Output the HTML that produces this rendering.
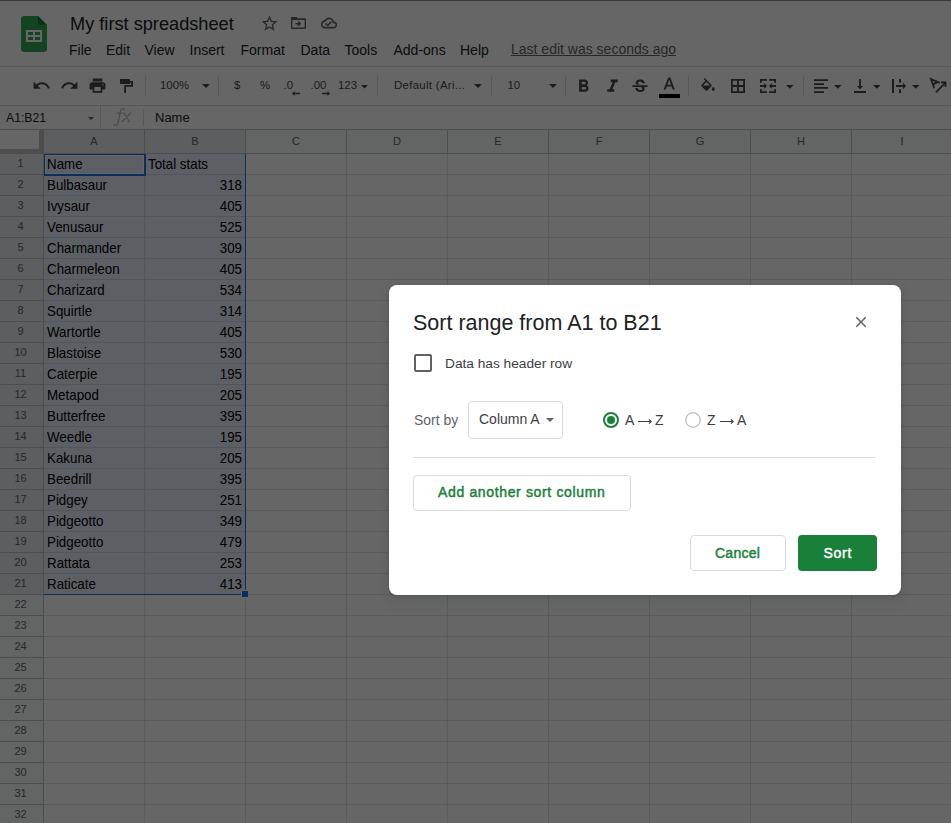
<!DOCTYPE html>
<html><head><meta charset="utf-8"><style>
html,body{margin:0;padding:0;width:951px;height:823px;overflow:hidden;background:#fff;}
body{position:relative;font-family:"Liberation Sans",sans-serif;}
.t{position:absolute;white-space:pre;line-height:normal;}
.r{position:absolute;box-sizing:content-box;}
.i{position:absolute;display:block;}
#scrim{position:absolute;left:0;top:0;width:951px;height:823px;background:rgba(0,0,0,0.6);}
#dlg{position:absolute;left:389px;top:285px;width:512px;height:310px;background:#fff;border-radius:8px;
box-shadow:0 4px 8px 3px rgba(60,64,67,.15),0 1px 3px rgba(60,64,67,.3);}
#dlgc{position:absolute;left:0;top:0;}
</style></head><body>
<div class="r" style="left:0px;top:0px;width:951px;height:1px;background:#919191;"></div>
<svg class="i" style="left:21px;top:16px" width="26" height="36" viewBox="0 0 26 36">
<path d="M3 0H17L26 9V33a3 3 0 0 1-3 3H3a3 3 0 0 1-3-3V3a3 3 0 0 1 3-3z" fill="#34a853"/>
<path d="M17 0L26 9H19a2 2 0 0 1-2-2z" fill="#188038"/>
<path d="M5 14H21V26H5z M7 16V19H12V16z M14 16V19H19V16z M7 21V24H12V21z M14 21V24H19V21z" fill="#fff" fill-rule="evenodd"/>
</svg>
<div class="t" style="left:70px;top:13.53px;font-size:18.2px;color:#202124;font-weight:400;">My first spreadsheet</div>
<svg class="i" style="left:259.5px;top:14px;" width="19" height="19" viewBox="0 0 24 24"><path fill="#5f6368" d="M22 9.24l-7.19-.62L12 2 9.19 8.63 2 9.24l5.46 4.73L5.82 21 12 17.27 18.18 21l-1.63-7.03L22 9.24zM12 15.4l-3.76 2.27 1-4.28-3.32-2.88 4.38-.38L12 6.1l1.71 4.04 4.38.38-3.32 2.88 1 4.28L12 15.4z"/></svg>
<svg class="i" style="left:291px;top:17px;" width="15" height="12" viewBox="0 0 15 12"><path fill="#5f6368" fill-rule="evenodd" d="M1 0H5.6L6.8 1.3H14A1 1 0 0 1 15 2.3V11A1 1 0 0 1 14 12H1A1 1 0 0 1 0 11V1A1 1 0 0 1 1 0Z M1.4 3H13.6V10.6H1.4Z"/><path fill="none" stroke="#5f6368" stroke-width="1.4" d="M4.3 6.8H9.2 M7 4.5L9.3 6.8 7 9.1"/></svg>
<svg class="i" style="left:321px;top:15.3px;" width="16" height="16" viewBox="0 0 24 24"><path fill="#5f6368" stroke="#5f6368" stroke-width="0.7" d="M19.35 10.04C18.67 6.59 15.64 4 12 4 9.11 4 6.6 5.64 5.35 8.04 2.34 8.36 0 10.91 0 14c0 3.31 2.69 6 6 6h13c2.76 0 5-2.24 5-5 0-2.64-2.05-4.78-4.65-4.96zM19 18H6c-2.21 0-4-1.79-4-4 0-2.05 1.53-3.76 3.56-3.97l1.07-.11.5-.95C8.080 7.14 9.94 6 12 6c2.62 0 4.88 1.86 5.39 4.43l.3 1.5 1.53.11c1.56.1 2.78 1.41 2.78 2.96 0 1.65-1.35 3-3 3zm-9-3.82l-2.09-2.09L6.5 13.5 10 17l6.01-6.01-1.41-1.41z"/></svg>
<div class="t" style="left:69px;top:42.33px;font-size:14px;color:#202124;font-weight:400;">File</div>
<div class="t" style="left:106px;top:42.33px;font-size:14px;color:#202124;font-weight:400;">Edit</div>
<div class="t" style="left:144.5px;top:42.33px;font-size:14px;color:#202124;font-weight:400;">View</div>
<div class="t" style="left:189.5px;top:42.33px;font-size:14px;color:#202124;font-weight:400;">Insert</div>
<div class="t" style="left:240.5px;top:42.33px;font-size:14px;color:#202124;font-weight:400;">Format</div>
<div class="t" style="left:300.5px;top:42.33px;font-size:14px;color:#202124;font-weight:400;">Data</div>
<div class="t" style="left:344.5px;top:42.33px;font-size:14px;color:#202124;font-weight:400;">Tools</div>
<div class="t" style="left:393.5px;top:42.33px;font-size:14px;color:#202124;font-weight:400;">Add-ons</div>
<div class="t" style="left:460px;top:42.33px;font-size:14px;color:#202124;font-weight:400;">Help</div>
<div class="t" style="left:511px;top:41.33px;font-size:14px;color:#5f6368;font-weight:400;text-decoration:underline;">Last edit was seconds ago</div>
<div class="r" style="left:0px;top:66px;width:951px;height:1px;background:#dadce0;"></div>
<div class="r" style="left:0px;top:105px;width:951px;height:1px;background:#dadce0;"></div>
<svg class="i" style="left:32px;top:76.1px;" width="19" height="19" viewBox="0 0 24 24"><path fill="#444746" d="M12.5 8c-2.65 0-5.05.99-6.9 2.6L2 7v9h9l-3.62-3.62c1.39-1.16 3.16-1.88 5.12-1.88 3.54 0 6.55 2.31 7.6 5.5l2.37-.78C21.08 11.03 17.15 8 12.5 8z"/></svg>
<svg class="i" style="left:60px;top:76.1px;" width="19" height="19" viewBox="0 0 24 24"><path fill="#444746" d="M18.4 10.6C16.55 8.99 14.15 8 11.5 8c-4.65 0-8.58 3.03-9.96 7.22L3.9 16c1.05-3.19 4.05-5.5 7.6-5.5 1.95 0 3.730.72 5.12 1.88L13 16h9V7l-3.6 3.6z"/></svg>
<svg class="i" style="left:88px;top:76.1px;" width="19" height="19" viewBox="0 0 24 24"><path fill="#444746" d="M19 8H5c-1.66 0-3 1.34-3 3v6h4v4h12v-4h4v-6c0-1.66-1.34-3-3-3zm-3 11H8v-5h8v5zm3-7c-.55 0-1-.45-1-1s.45-1 1-1 1 .45 1 1-.45 1-1 1zm-1-9H6v4h12V3z"/></svg>
<svg class="i" style="left:120px;top:79px;" width="13" height="14" viewBox="0 0 13 14"><path fill="#444746" d="M0.6 0H9.4A.6.6 0 0 1 10 .6V2H13V7.8H6V14H4.2V6H11.2V3.8H10V4.4A.6.6 0 0 1 9.4 5H.6A.6.6 0 0 1 0 4.4V.6A.6.6 0 0 1 .6 0Z"/></svg>
<div class="r" style="left:145px;top:76px;width:1px;height:20px;background:#dadce0;"></div>
<div class="t" style="left:160px;top:78.68px;font-size:11.4px;color:#444746;font-weight:400;">100%</div>
<svg class="i" style="left:202px;top:84px" width="8" height="4" viewBox="0 0 8 4"><path fill="#444746" d="M0 0H8L4.0 4z"/></svg>
<div class="r" style="left:218px;top:76px;width:1px;height:20px;background:#dadce0;"></div>
<div class="t" style="left:234px;top:78.68px;font-size:11.4px;color:#444746;font-weight:400;">$</div>
<div class="t" style="left:260px;top:78.68px;font-size:11.4px;color:#444746;font-weight:400;">%</div>
<div class="t" style="left:283.5px;top:78.68px;font-size:11.4px;color:#444746;font-weight:400;">.0</div>
<svg class="i" style="left:292px;top:91px" width="8" height="5" viewBox="0 0 8 5"><path fill="#444746" d="M0 2.5L2.5 0V1.8H8V3.2H2.5V5z"/></svg>
<div class="t" style="left:310.5px;top:78.68px;font-size:11.4px;color:#444746;font-weight:400;">.00</div>
<svg class="i" style="left:322px;top:91px" width="8" height="5" viewBox="0 0 8 5"><path fill="#444746" d="M8 2.5L5.5 0V1.8H0V3.2H5.5V5z"/></svg>
<div class="t" style="left:338px;top:78.68px;font-size:11.4px;color:#444746;font-weight:400;">123</div>
<svg class="i" style="left:360.5px;top:85px" width="7" height="3.6" viewBox="0 0 7 3.6"><path fill="#444746" d="M0 0H7L3.5 3.6z"/></svg>
<div class="r" style="left:377px;top:76px;width:1px;height:20px;background:#dadce0;"></div>
<div class="t" style="left:394px;top:78.68px;font-size:11.4px;color:#444746;font-weight:400;letter-spacing:0.32px;">Default (Ari...</div>
<svg class="i" style="left:473.5px;top:84px" width="8" height="4" viewBox="0 0 8 4"><path fill="#444746" d="M0 0H8L4.0 4z"/></svg>
<div class="r" style="left:491px;top:76px;width:1px;height:20px;background:#dadce0;"></div>
<div class="t" style="left:507.5px;top:78.68px;font-size:11.4px;color:#444746;font-weight:400;">10</div>
<svg class="i" style="left:549px;top:84px" width="8" height="4" viewBox="0 0 8 4"><path fill="#444746" d="M0 0H8L4.0 4z"/></svg>
<div class="r" style="left:565px;top:76px;width:1px;height:20px;background:#dadce0;"></div>
<svg class="i" style="left:573px;top:76px;" width="21" height="21" viewBox="0 0 24 24"><path fill="#444746" d="M15.6 10.79c.97-.67 1.65-1.77 1.65-2.79 0-2.26-1.75-4-4-4H7v14h7.040c2.09 0 3.71-1.7 3.71-3.79 0-1.52-.86-2.82-2.15-3.42zM10 6.5h3c.83 0 1.5.67 1.5 1.5s-.67 1.5-1.5 1.5h-3v-3zm3.5 9H10v-3h3.5c.83 0 1.5.67 1.5 1.5s-.67 1.5-1.5 1.5z"/></svg>
<svg class="i" style="left:601.5px;top:75.6px;" width="21" height="21" viewBox="0 0 24 24"><path fill="#444746" d="M10 4v3h2.21l-3.42 8H6v3h8v-3h-2.21l3.42-8H18V4z"/></svg>
<svg class="i" style="left:630px;top:77.3px;" width="20" height="20" viewBox="0 0 24 24"><path fill="#444746" d="M7.24 8.75c-.26-.48-.39-1.03-.39-1.67 0-.61.13-1.16.4-1.670.26-.5.63-.93 1.11-1.29.48-.35 1.05-.63 1.7-.83.66-.19 1.39-.29 2.18-.29.81 0 1.54.11 2.21.34.66.22 1.23.54 1.69.94.47.4.83.88 1.08 1.43.25.55.38 1.15.38 1.81h-3.01c0-.31-.05-.59-.15-.85-.09-.27-.24-.49-.44-.68-.2-.19-.45-.33-.75-.44-.3-.1-.66-.16-1.06-.16-.39 0-.74.04-1.03.13-.29.09-.53.21-.72.36-.19.16-.34.34-.44.55-.1.21-.15.43-.15.66 0 .48.25.88.74 1.21.38.25.77.48 1.41.7H7.39c-.05-.08-.11-.17-.15-.25zM21 12v-2H3v2h9.62c.18.07.4.14.55.2.37.17.66.34.87.51.21.17.35.36.43.57.07.2.11.43.11.69 0 .23-.05.45-.14.66-.09.2-.23.38-.42.53-.19.15-.42.26-.71.35-.29.08-.63.13-1.01.13-.43 0-.83-.04-1.18-.13s-.66-.23-.91-.42c-.25-.19-.45-.44-.59-.75-.14-.31-.25-.76-.25-1.21H6.4c0 .55.08 1.13.24 1.58.16.45.37.85.65 1.21.28.35.6.66.98.92.37.26.78.48 1.22.65.44.17.9.3 1.38.39.48.08.96.13 1.44.13.8 0 1.53-.09 2.18-.28s1.21-.45 1.67-.79c.46-.34.82-.77 1.07-1.27s.38-1.07.38-1.71c0-.6-.1-1.14-.31-1.61-.05-.11-.11-.23-.17-.33H21z"/></svg>
<svg class="i" style="left:659.4px;top:74.9px;" width="20.5" height="20.5" viewBox="0 0 24 24"><path fill="#444746" d="M5.49 17h2.42l1.27-3.5h5.65L16.09 17h2.42L13.25 3h-2.5L5.49 17zm4.42-5.61l2.03-5.79h.12l2.03 5.79H9.91z"/></svg>
<div class="r" style="left:659px;top:94px;width:21px;height:4px;background:#000;"></div>
<div class="r" style="left:688px;top:76px;width:1px;height:20px;background:#dadce0;"></div>
<svg class="i" style="left:699px;top:78px;" width="18" height="18" viewBox="0 0 24 24"><path fill="#444746" d="M16.56 8.94L7.62 0 6.21 1.41l2.38 2.38-5.15 5.15c-.59.59-.59 1.54 0 2.12l5.5 5.5c.29.29.68.44 1.06.44s.77-.15 1.06-.44l5.5-5.5c.59-.58.59-1.53 0-2.12zM5.21 10L10 5.21 14.790 10H5.21zM19 11.5s-2 2.17-2 3.5c0 1.1.9 2 2 2s2-.9 2-2c0-1.33-2-3.5-2-3.5z"/></svg>
<svg class="i" style="left:731px;top:79px;" width="14" height="14" viewBox="0 0 14 14"><path fill="#444746" fill-rule="evenodd" d="M0 0H14V14H0z M1.8 1.8V6.1H6.1V1.8z M7.9 1.8V6.1H12.2V1.8z M1.8 7.9V12.2H6.1V7.9z M7.9 7.9V12.2H12.2V7.9z"/></svg>
<svg class="i" style="left:760px;top:79px;" width="16" height="14" viewBox="0 0 16 14"><path fill="#444746" d="M0 0H7V1.8H1.8V3.8H0Z M0 10.2H1.8V12.2H7V14H0Z M9 0H16V3.8H14.2V1.8H9Z M9 12.2H14.2V10.2H16V14H9Z M0 6.1H4.2V4.1L7 7 4.2 9.9V7.9H0Z M16 6.1H11.8V4.1L9 7 11.8 9.9V7.9H16Z"/></svg>
<svg class="i" style="left:786px;top:85px" width="7.6" height="3.8" viewBox="0 0 7.6 3.8"><path fill="#444746" d="M0 0H7.6L3.8 3.8z"/></svg>
<div class="r" style="left:803px;top:76px;width:1px;height:20px;background:#dadce0;"></div>
<svg class="i" style="left:814px;top:79px;" width="14" height="14" viewBox="0 0 14 14"><path fill="#444746" d="M0 0.2H14V1.9H0Z M0 4.2H10V5.9H0Z M0 8.1H14V9.8H0Z M0 12.2H10V13.9H0Z"/></svg>
<svg class="i" style="left:834px;top:85px" width="7.6" height="3.8" viewBox="0 0 7.6 3.8"><path fill="#444746" d="M0 0H7.6L3.8 3.8z"/></svg>
<svg class="i" style="left:854px;top:79px;" width="12" height="14" viewBox="0 0 12 14"><path fill="#444746" d="M5.1 0H6.9V7H9.2L6 10.3 2.8 7H5.1z M0 12.1H12V13.9H0z"/></svg>
<svg class="i" style="left:873px;top:85px" width="7.6" height="3.8" viewBox="0 0 7.6 3.8"><path fill="#444746" d="M0 0H7.6L3.8 3.8z"/></svg>
<svg class="i" style="left:885px;top:72px;" width="66" height="26" viewBox="0 0 66 26"><path fill="#444746" d="M7 7H9V21H7z M14 7H16V10.8H14z M14 17.3H16V21H14z M11 13.1H18V14.9H11z M18 10.8L21 14 18 17.2z"/></svg>
<svg class="i" style="left:912px;top:85px" width="7.6" height="3.8" viewBox="0 0 7.6 3.8"><path fill="#444746" d="M0 0H7.6L3.8 3.8z"/></svg>
<svg class="i" style="left:885px;top:72px;" width="66" height="26" viewBox="0 0 66 26"><path fill="none" stroke="#444746" stroke-width="1.8" stroke-linejoin="miter" d="M49.3 16.3L46 7.2 54.8 10.8 M47.9 12.6L52.2 10.1 M50.9 20.3L60 11.2 M56 10.4H60.5V14.9"/></svg>
<div class="t" style="left:6px;top:110.96px;font-size:12.2px;color:#202124;font-weight:400;">A1:B21</div>
<svg class="i" style="left:88px;top:117px" width="6" height="3" viewBox="0 0 6 3"><path fill="#5f6368" d="M0 0H6L3.0 3z"/></svg>
<div class="r" style="left:100px;top:106px;width:1px;height:23px;background:#dadce0;"></div>
<svg class="i" style="left:106px;top:106px;" width="32" height="23" viewBox="0 0 32 23"><path fill="none" stroke="#bdc1c6" stroke-width="1.3" stroke-linecap="round" d="M18.3 4.0C17.8 2.4 15.2 2.0 14.6 4.6L12.1 16.8C11.6 19.6 9.0 20.2 7.6 18.4 M11.2 7.2H15.9 M18.3 7.4L23.2 15.5 M24.5 7.3L16.2 15.5"/><path fill="none" stroke="#bdc1c6" stroke-width="1.1" d="M15.6 7.2H19 M23.3 7.2H25.2 M15.1 15.5H17.6 M21.6 15.5H24.3"/></svg>
<div class="r" style="left:143px;top:109px;width:1px;height:17px;background:#dadce0;"></div>
<div class="t" style="left:155px;top:110.23px;font-size:13px;color:#202124;font-weight:400;">Name</div>
<div class="r" style="left:0px;top:129px;width:951px;height:1px;background:#c0c0c0;"></div>
<div class="r" style="left:0px;top:130px;width:951px;height:23px;background:#f8f9fa;"></div>
<div class="r" style="left:44px;top:130px;width:201px;height:23px;background:#e8eaed;"></div>
<div class="r" style="left:0px;top:130px;width:39px;height:19px;background:#ffffff;"></div>
<div class="r" style="left:39px;top:130px;width:5px;height:24px;background:#c0c0c0;"></div>
<div class="r" style="left:0px;top:149px;width:44px;height:5px;background:#c0c0c0;"></div>
<div class="r" style="left:44px;top:153px;width:907px;height:1px;background:#c0c0c0;"></div>
<div class="r" style="left:0px;top:154px;width:43px;height:669px;background:#f8f9fa;"></div>
<div class="r" style="left:0px;top:154px;width:43px;height:441px;background:#e8eaed;"></div>
<div class="r" style="left:43px;top:154px;width:1px;height:669px;background:#c0c0c0;"></div>
<div class="r" style="left:0px;top:174px;width:43px;height:1px;background:#c0c0c0;"></div>
<div class="r" style="left:44px;top:174px;width:907px;height:1px;background:#e2e3e3;"></div>
<div class="r" style="left:0px;top:195px;width:43px;height:1px;background:#c0c0c0;"></div>
<div class="r" style="left:44px;top:195px;width:907px;height:1px;background:#e2e3e3;"></div>
<div class="r" style="left:0px;top:216px;width:43px;height:1px;background:#c0c0c0;"></div>
<div class="r" style="left:44px;top:216px;width:907px;height:1px;background:#e2e3e3;"></div>
<div class="r" style="left:0px;top:237px;width:43px;height:1px;background:#c0c0c0;"></div>
<div class="r" style="left:44px;top:237px;width:907px;height:1px;background:#e2e3e3;"></div>
<div class="r" style="left:0px;top:258px;width:43px;height:1px;background:#c0c0c0;"></div>
<div class="r" style="left:44px;top:258px;width:907px;height:1px;background:#e2e3e3;"></div>
<div class="r" style="left:0px;top:279px;width:43px;height:1px;background:#c0c0c0;"></div>
<div class="r" style="left:44px;top:279px;width:907px;height:1px;background:#e2e3e3;"></div>
<div class="r" style="left:0px;top:300px;width:43px;height:1px;background:#c0c0c0;"></div>
<div class="r" style="left:44px;top:300px;width:907px;height:1px;background:#e2e3e3;"></div>
<div class="r" style="left:0px;top:321px;width:43px;height:1px;background:#c0c0c0;"></div>
<div class="r" style="left:44px;top:321px;width:907px;height:1px;background:#e2e3e3;"></div>
<div class="r" style="left:0px;top:342px;width:43px;height:1px;background:#c0c0c0;"></div>
<div class="r" style="left:44px;top:342px;width:907px;height:1px;background:#e2e3e3;"></div>
<div class="r" style="left:0px;top:363px;width:43px;height:1px;background:#c0c0c0;"></div>
<div class="r" style="left:44px;top:363px;width:907px;height:1px;background:#e2e3e3;"></div>
<div class="r" style="left:0px;top:384px;width:43px;height:1px;background:#c0c0c0;"></div>
<div class="r" style="left:44px;top:384px;width:907px;height:1px;background:#e2e3e3;"></div>
<div class="r" style="left:0px;top:405px;width:43px;height:1px;background:#c0c0c0;"></div>
<div class="r" style="left:44px;top:405px;width:907px;height:1px;background:#e2e3e3;"></div>
<div class="r" style="left:0px;top:426px;width:43px;height:1px;background:#c0c0c0;"></div>
<div class="r" style="left:44px;top:426px;width:907px;height:1px;background:#e2e3e3;"></div>
<div class="r" style="left:0px;top:447px;width:43px;height:1px;background:#c0c0c0;"></div>
<div class="r" style="left:44px;top:447px;width:907px;height:1px;background:#e2e3e3;"></div>
<div class="r" style="left:0px;top:468px;width:43px;height:1px;background:#c0c0c0;"></div>
<div class="r" style="left:44px;top:468px;width:907px;height:1px;background:#e2e3e3;"></div>
<div class="r" style="left:0px;top:489px;width:43px;height:1px;background:#c0c0c0;"></div>
<div class="r" style="left:44px;top:489px;width:907px;height:1px;background:#e2e3e3;"></div>
<div class="r" style="left:0px;top:510px;width:43px;height:1px;background:#c0c0c0;"></div>
<div class="r" style="left:44px;top:510px;width:907px;height:1px;background:#e2e3e3;"></div>
<div class="r" style="left:0px;top:531px;width:43px;height:1px;background:#c0c0c0;"></div>
<div class="r" style="left:44px;top:531px;width:907px;height:1px;background:#e2e3e3;"></div>
<div class="r" style="left:0px;top:552px;width:43px;height:1px;background:#c0c0c0;"></div>
<div class="r" style="left:44px;top:552px;width:907px;height:1px;background:#e2e3e3;"></div>
<div class="r" style="left:0px;top:573px;width:43px;height:1px;background:#c0c0c0;"></div>
<div class="r" style="left:44px;top:573px;width:907px;height:1px;background:#e2e3e3;"></div>
<div class="r" style="left:0px;top:594px;width:43px;height:1px;background:#c0c0c0;"></div>
<div class="r" style="left:44px;top:594px;width:907px;height:1px;background:#e2e3e3;"></div>
<div class="r" style="left:0px;top:615px;width:43px;height:1px;background:#c0c0c0;"></div>
<div class="r" style="left:44px;top:615px;width:907px;height:1px;background:#e2e3e3;"></div>
<div class="r" style="left:0px;top:636px;width:43px;height:1px;background:#c0c0c0;"></div>
<div class="r" style="left:44px;top:636px;width:907px;height:1px;background:#e2e3e3;"></div>
<div class="r" style="left:0px;top:657px;width:43px;height:1px;background:#c0c0c0;"></div>
<div class="r" style="left:44px;top:657px;width:907px;height:1px;background:#e2e3e3;"></div>
<div class="r" style="left:0px;top:678px;width:43px;height:1px;background:#c0c0c0;"></div>
<div class="r" style="left:44px;top:678px;width:907px;height:1px;background:#e2e3e3;"></div>
<div class="r" style="left:0px;top:699px;width:43px;height:1px;background:#c0c0c0;"></div>
<div class="r" style="left:44px;top:699px;width:907px;height:1px;background:#e2e3e3;"></div>
<div class="r" style="left:0px;top:720px;width:43px;height:1px;background:#c0c0c0;"></div>
<div class="r" style="left:44px;top:720px;width:907px;height:1px;background:#e2e3e3;"></div>
<div class="r" style="left:0px;top:741px;width:43px;height:1px;background:#c0c0c0;"></div>
<div class="r" style="left:44px;top:741px;width:907px;height:1px;background:#e2e3e3;"></div>
<div class="r" style="left:0px;top:762px;width:43px;height:1px;background:#c0c0c0;"></div>
<div class="r" style="left:44px;top:762px;width:907px;height:1px;background:#e2e3e3;"></div>
<div class="r" style="left:0px;top:783px;width:43px;height:1px;background:#c0c0c0;"></div>
<div class="r" style="left:44px;top:783px;width:907px;height:1px;background:#e2e3e3;"></div>
<div class="r" style="left:0px;top:804px;width:43px;height:1px;background:#c0c0c0;"></div>
<div class="r" style="left:44px;top:804px;width:907px;height:1px;background:#e2e3e3;"></div>
<div class="r" style="left:0px;top:825px;width:43px;height:1px;background:#c0c0c0;"></div>
<div class="r" style="left:44px;top:825px;width:907px;height:1px;background:#e2e3e3;"></div>
<div class="r" style="left:144px;top:130px;width:1px;height:23px;background:#c0c0c0;"></div>
<div class="r" style="left:144px;top:154px;width:1px;height:669px;background:#e2e3e3;"></div>
<div class="r" style="left:245px;top:130px;width:1px;height:23px;background:#c0c0c0;"></div>
<div class="r" style="left:245px;top:154px;width:1px;height:669px;background:#e2e3e3;"></div>
<div class="r" style="left:346px;top:130px;width:1px;height:23px;background:#c0c0c0;"></div>
<div class="r" style="left:346px;top:154px;width:1px;height:669px;background:#e2e3e3;"></div>
<div class="r" style="left:447px;top:130px;width:1px;height:23px;background:#c0c0c0;"></div>
<div class="r" style="left:447px;top:154px;width:1px;height:669px;background:#e2e3e3;"></div>
<div class="r" style="left:548px;top:130px;width:1px;height:23px;background:#c0c0c0;"></div>
<div class="r" style="left:548px;top:154px;width:1px;height:669px;background:#e2e3e3;"></div>
<div class="r" style="left:649px;top:130px;width:1px;height:23px;background:#c0c0c0;"></div>
<div class="r" style="left:649px;top:154px;width:1px;height:669px;background:#e2e3e3;"></div>
<div class="r" style="left:750px;top:130px;width:1px;height:23px;background:#c0c0c0;"></div>
<div class="r" style="left:750px;top:154px;width:1px;height:669px;background:#e2e3e3;"></div>
<div class="r" style="left:851px;top:130px;width:1px;height:23px;background:#c0c0c0;"></div>
<div class="r" style="left:851px;top:154px;width:1px;height:669px;background:#e2e3e3;"></div>
<div class="r" style="left:952px;top:130px;width:1px;height:23px;background:#c0c0c0;"></div>
<div class="r" style="left:952px;top:154px;width:1px;height:669px;background:#e2e3e3;"></div>
<div class="r" style="left:44px;top:154px;width:201px;height:441px;background:rgba(14,101,235,0.1);"></div>
<div class="t" style="left:74px;width:40px;text-align:center;top:135.04px;font-size:11px;color:#5f6368">A</div>
<div class="t" style="left:175px;width:40px;text-align:center;top:135.04px;font-size:11px;color:#5f6368">B</div>
<div class="t" style="left:276px;width:40px;text-align:center;top:135.04px;font-size:11px;color:#5f6368">C</div>
<div class="t" style="left:377px;width:40px;text-align:center;top:135.04px;font-size:11px;color:#5f6368">D</div>
<div class="t" style="left:478px;width:40px;text-align:center;top:135.04px;font-size:11px;color:#5f6368">E</div>
<div class="t" style="left:579px;width:40px;text-align:center;top:135.04px;font-size:11px;color:#5f6368">F</div>
<div class="t" style="left:680px;width:40px;text-align:center;top:135.04px;font-size:11px;color:#5f6368">G</div>
<div class="t" style="left:781px;width:40px;text-align:center;top:135.04px;font-size:11px;color:#5f6368">H</div>
<div class="t" style="left:882px;width:40px;text-align:center;top:135.04px;font-size:11px;color:#5f6368">I</div>
<div class="t" style="left:0px;width:41px;text-align:center;top:157.04px;font-size:11px;color:#5f6368">1</div>
<div class="t" style="left:0px;width:41px;text-align:center;top:178.04px;font-size:11px;color:#5f6368">2</div>
<div class="t" style="left:0px;width:41px;text-align:center;top:199.04px;font-size:11px;color:#5f6368">3</div>
<div class="t" style="left:0px;width:41px;text-align:center;top:220.04px;font-size:11px;color:#5f6368">4</div>
<div class="t" style="left:0px;width:41px;text-align:center;top:241.04px;font-size:11px;color:#5f6368">5</div>
<div class="t" style="left:0px;width:41px;text-align:center;top:262.05px;font-size:11px;color:#5f6368">6</div>
<div class="t" style="left:0px;width:41px;text-align:center;top:283.05px;font-size:11px;color:#5f6368">7</div>
<div class="t" style="left:0px;width:41px;text-align:center;top:304.05px;font-size:11px;color:#5f6368">8</div>
<div class="t" style="left:0px;width:41px;text-align:center;top:325.05px;font-size:11px;color:#5f6368">9</div>
<div class="t" style="left:0px;width:41px;text-align:center;top:346.05px;font-size:11px;color:#5f6368">10</div>
<div class="t" style="left:0px;width:41px;text-align:center;top:367.05px;font-size:11px;color:#5f6368">11</div>
<div class="t" style="left:0px;width:41px;text-align:center;top:388.05px;font-size:11px;color:#5f6368">12</div>
<div class="t" style="left:0px;width:41px;text-align:center;top:409.05px;font-size:11px;color:#5f6368">13</div>
<div class="t" style="left:0px;width:41px;text-align:center;top:430.05px;font-size:11px;color:#5f6368">14</div>
<div class="t" style="left:0px;width:41px;text-align:center;top:451.05px;font-size:11px;color:#5f6368">15</div>
<div class="t" style="left:0px;width:41px;text-align:center;top:472.05px;font-size:11px;color:#5f6368">16</div>
<div class="t" style="left:0px;width:41px;text-align:center;top:493.05px;font-size:11px;color:#5f6368">17</div>
<div class="t" style="left:0px;width:41px;text-align:center;top:514.04px;font-size:11px;color:#5f6368">18</div>
<div class="t" style="left:0px;width:41px;text-align:center;top:535.04px;font-size:11px;color:#5f6368">19</div>
<div class="t" style="left:0px;width:41px;text-align:center;top:556.04px;font-size:11px;color:#5f6368">20</div>
<div class="t" style="left:0px;width:41px;text-align:center;top:577.04px;font-size:11px;color:#5f6368">21</div>
<div class="t" style="left:0px;width:41px;text-align:center;top:598.04px;font-size:11px;color:#5f6368">22</div>
<div class="t" style="left:0px;width:41px;text-align:center;top:619.04px;font-size:11px;color:#5f6368">23</div>
<div class="t" style="left:0px;width:41px;text-align:center;top:640.04px;font-size:11px;color:#5f6368">24</div>
<div class="t" style="left:0px;width:41px;text-align:center;top:661.04px;font-size:11px;color:#5f6368">25</div>
<div class="t" style="left:0px;width:41px;text-align:center;top:682.04px;font-size:11px;color:#5f6368">26</div>
<div class="t" style="left:0px;width:41px;text-align:center;top:703.04px;font-size:11px;color:#5f6368">27</div>
<div class="t" style="left:0px;width:41px;text-align:center;top:724.04px;font-size:11px;color:#5f6368">28</div>
<div class="t" style="left:0px;width:41px;text-align:center;top:745.04px;font-size:11px;color:#5f6368">29</div>
<div class="t" style="left:0px;width:41px;text-align:center;top:766.04px;font-size:11px;color:#5f6368">30</div>
<div class="t" style="left:0px;width:41px;text-align:center;top:787.04px;font-size:11px;color:#5f6368">31</div>
<div class="t" style="left:0px;width:41px;text-align:center;top:808.04px;font-size:11px;color:#5f6368">32</div>
<div class="t" style="left:47px;top:156.94px;font-size:13.33px;color:#000;font-weight:400;transform:scaleY(1.08);transform-origin:0 12.06px;">Name</div>
<div class="t" style="left:148px;top:156.94px;font-size:13.33px;color:#000;font-weight:400;transform:scaleY(1.08);transform-origin:0 12.06px;">Total stats</div>
<div class="t" style="left:47px;top:177.94px;font-size:13.33px;color:#000;font-weight:400;transform:scaleY(1.08);transform-origin:0 12.06px;">Bulbasaur</div>
<div class="t" style="left:145px;width:97px;text-align:right;top:177.94px;font-size:13.33px;color:#000;transform:scaleY(1.08);transform-origin:0 12.06px;">318</div>
<div class="t" style="left:47px;top:198.94px;font-size:13.33px;color:#000;font-weight:400;transform:scaleY(1.08);transform-origin:0 12.06px;">Ivysaur</div>
<div class="t" style="left:145px;width:97px;text-align:right;top:198.94px;font-size:13.33px;color:#000;transform:scaleY(1.08);transform-origin:0 12.06px;">405</div>
<div class="t" style="left:47px;top:219.94px;font-size:13.33px;color:#000;font-weight:400;transform:scaleY(1.08);transform-origin:0 12.06px;">Venusaur</div>
<div class="t" style="left:145px;width:97px;text-align:right;top:219.94px;font-size:13.33px;color:#000;transform:scaleY(1.08);transform-origin:0 12.06px;">525</div>
<div class="t" style="left:47px;top:240.94px;font-size:13.33px;color:#000;font-weight:400;transform:scaleY(1.08);transform-origin:0 12.06px;">Charmander</div>
<div class="t" style="left:145px;width:97px;text-align:right;top:240.94px;font-size:13.33px;color:#000;transform:scaleY(1.08);transform-origin:0 12.06px;">309</div>
<div class="t" style="left:47px;top:261.94px;font-size:13.33px;color:#000;font-weight:400;transform:scaleY(1.08);transform-origin:0 12.06px;">Charmeleon</div>
<div class="t" style="left:145px;width:97px;text-align:right;top:261.94px;font-size:13.33px;color:#000;transform:scaleY(1.08);transform-origin:0 12.06px;">405</div>
<div class="t" style="left:47px;top:282.94px;font-size:13.33px;color:#000;font-weight:400;transform:scaleY(1.08);transform-origin:0 12.06px;">Charizard</div>
<div class="t" style="left:145px;width:97px;text-align:right;top:282.94px;font-size:13.33px;color:#000;transform:scaleY(1.08);transform-origin:0 12.06px;">534</div>
<div class="t" style="left:47px;top:303.94px;font-size:13.33px;color:#000;font-weight:400;transform:scaleY(1.08);transform-origin:0 12.06px;">Squirtle</div>
<div class="t" style="left:145px;width:97px;text-align:right;top:303.94px;font-size:13.33px;color:#000;transform:scaleY(1.08);transform-origin:0 12.06px;">314</div>
<div class="t" style="left:47px;top:324.94px;font-size:13.33px;color:#000;font-weight:400;transform:scaleY(1.08);transform-origin:0 12.06px;">Wartortle</div>
<div class="t" style="left:145px;width:97px;text-align:right;top:324.94px;font-size:13.33px;color:#000;transform:scaleY(1.08);transform-origin:0 12.06px;">405</div>
<div class="t" style="left:47px;top:345.94px;font-size:13.33px;color:#000;font-weight:400;transform:scaleY(1.08);transform-origin:0 12.06px;">Blastoise</div>
<div class="t" style="left:145px;width:97px;text-align:right;top:345.94px;font-size:13.33px;color:#000;transform:scaleY(1.08);transform-origin:0 12.06px;">530</div>
<div class="t" style="left:47px;top:366.94px;font-size:13.33px;color:#000;font-weight:400;transform:scaleY(1.08);transform-origin:0 12.06px;">Caterpie</div>
<div class="t" style="left:145px;width:97px;text-align:right;top:366.94px;font-size:13.33px;color:#000;transform:scaleY(1.08);transform-origin:0 12.06px;">195</div>
<div class="t" style="left:47px;top:387.94px;font-size:13.33px;color:#000;font-weight:400;transform:scaleY(1.08);transform-origin:0 12.06px;">Metapod</div>
<div class="t" style="left:145px;width:97px;text-align:right;top:387.94px;font-size:13.33px;color:#000;transform:scaleY(1.08);transform-origin:0 12.06px;">205</div>
<div class="t" style="left:47px;top:408.94px;font-size:13.33px;color:#000;font-weight:400;transform:scaleY(1.08);transform-origin:0 12.06px;">Butterfree</div>
<div class="t" style="left:145px;width:97px;text-align:right;top:408.94px;font-size:13.33px;color:#000;transform:scaleY(1.08);transform-origin:0 12.06px;">395</div>
<div class="t" style="left:47px;top:429.94px;font-size:13.33px;color:#000;font-weight:400;transform:scaleY(1.08);transform-origin:0 12.06px;">Weedle</div>
<div class="t" style="left:145px;width:97px;text-align:right;top:429.94px;font-size:13.33px;color:#000;transform:scaleY(1.08);transform-origin:0 12.06px;">195</div>
<div class="t" style="left:47px;top:450.94px;font-size:13.33px;color:#000;font-weight:400;transform:scaleY(1.08);transform-origin:0 12.06px;">Kakuna</div>
<div class="t" style="left:145px;width:97px;text-align:right;top:450.94px;font-size:13.33px;color:#000;transform:scaleY(1.08);transform-origin:0 12.06px;">205</div>
<div class="t" style="left:47px;top:471.94px;font-size:13.33px;color:#000;font-weight:400;transform:scaleY(1.08);transform-origin:0 12.06px;">Beedrill</div>
<div class="t" style="left:145px;width:97px;text-align:right;top:471.94px;font-size:13.33px;color:#000;transform:scaleY(1.08);transform-origin:0 12.06px;">395</div>
<div class="t" style="left:47px;top:492.94px;font-size:13.33px;color:#000;font-weight:400;transform:scaleY(1.08);transform-origin:0 12.06px;">Pidgey</div>
<div class="t" style="left:145px;width:97px;text-align:right;top:492.94px;font-size:13.33px;color:#000;transform:scaleY(1.08);transform-origin:0 12.06px;">251</div>
<div class="t" style="left:47px;top:513.94px;font-size:13.33px;color:#000;font-weight:400;transform:scaleY(1.08);transform-origin:0 12.06px;">Pidgeotto</div>
<div class="t" style="left:145px;width:97px;text-align:right;top:513.94px;font-size:13.33px;color:#000;transform:scaleY(1.08);transform-origin:0 12.06px;">349</div>
<div class="t" style="left:47px;top:534.94px;font-size:13.33px;color:#000;font-weight:400;transform:scaleY(1.08);transform-origin:0 12.06px;">Pidgeotto</div>
<div class="t" style="left:145px;width:97px;text-align:right;top:534.94px;font-size:13.33px;color:#000;transform:scaleY(1.08);transform-origin:0 12.06px;">479</div>
<div class="t" style="left:47px;top:555.94px;font-size:13.33px;color:#000;font-weight:400;transform:scaleY(1.08);transform-origin:0 12.06px;">Rattata</div>
<div class="t" style="left:145px;width:97px;text-align:right;top:555.94px;font-size:13.33px;color:#000;transform:scaleY(1.08);transform-origin:0 12.06px;">253</div>
<div class="t" style="left:47px;top:576.94px;font-size:13.33px;color:#000;font-weight:400;transform:scaleY(1.08);transform-origin:0 12.06px;">Raticate</div>
<div class="t" style="left:145px;width:97px;text-align:right;top:576.94px;font-size:13.33px;color:#000;transform:scaleY(1.08);transform-origin:0 12.06px;">413</div>
<div class="r" style="left:44px;top:594px;width:197px;height:1px;background:#1a73e8;"></div>
<div class="r" style="left:245px;top:154px;width:1px;height:436px;background:#1a73e8;"></div>
<div class="r" style="left:44px;top:154px;width:99px;height:19px;border-style:solid;border-color:#1a73e8;border-width:1px 2px 2px 1px;box-shadow:inset 0 0 0 1px #fff"></div>
<div class="r" style="left:241px;top:590px;width:8px;height:8px;background:#fff;"></div>
<div class="r" style="left:242px;top:591px;width:6px;height:6px;background:#1a73e8;"></div>
<div id="scrim"></div>
<div id="dlg"></div>
<div id="dlgc">
<div class="t" style="left:413px;top:310.54px;font-size:21.5px;color:#202124;font-weight:400;transform:scaleY(1.045);transform-origin:0 19.46px;">Sort range from A1 to B21</div>
<svg class="i" style="left:852px;top:313px" width="18" height="18" viewBox="0 0 24 24"><path fill="#5f6368" d="M19 6.41L17.59 5 12 10.59 6.41 5 5 6.41 10.59 12 5 17.59 6.41 19 12 13.410 17.59 19 19 17.59 13.41 12z"/></svg>
<div class="r" style="left:414px;top:354px;width:14px;height:14px;border:2px solid #5f6368;border-radius:2px"></div>
<div class="t" style="left:445px;top:355.60px;font-size:13.7px;color:#3c4043;font-weight:400;">Data has header row</div>
<div class="t" style="left:414px;top:412.33px;font-size:14px;color:#5f6368;font-weight:400;">Sort by</div>
<div class="r" style="left:468px;top:401px;width:93px;height:36px;border:1px solid #dadce0;border-radius:4px"></div>
<div class="t" style="left:479px;top:411.33px;font-size:14px;color:#3c4043;font-weight:400;">Column A</div>
<svg class="i" style="left:546px;top:418px" width="8" height="4" viewBox="0 0 8 4"><path fill="#5f6368" d="M0 0H8L4.0 4z"/></svg>
<div class="r" style="left:603px;top:412px;width:12px;height:12px;border:2px solid #188038;border-radius:50%"></div>
<div class="r" style="left:607px;top:416px;width:8px;height:8px;background:#188038;border-radius:50%"></div>
<div class="t" style="left:625px;top:412.33px;font-size:14px;color:#3c4043;font-weight:400;">A</div>
<div class="t" style="left:655px;top:412.33px;font-size:14px;color:#3c4043;font-weight:400;">Z</div>
<svg class="i" style="left:638px;top:419px" width="14" height="5" viewBox="0 0 14 5"><path fill="none" stroke="#3c4043" stroke-width="1.1" d="M0 2.5H13 M11 0.4L13.2 2.5 11 4.6"/></svg>
<svg class="i" style="left:685px;top:412px" width="16" height="16" viewBox="0 0 16 16"><circle cx="8" cy="8" r="7.3" fill="none" stroke="#bdbdbd" stroke-width="1.3"/></svg>
<div class="t" style="left:707px;top:412.33px;font-size:14px;color:#3c4043;font-weight:400;">Z</div>
<div class="t" style="left:737px;top:412.33px;font-size:14px;color:#3c4043;font-weight:400;">A</div>
<svg class="i" style="left:720px;top:419px" width="14" height="5" viewBox="0 0 14 5"><path fill="none" stroke="#3c4043" stroke-width="1.1" d="M0 2.5H13 M11 0.4L13.2 2.5 11 4.6"/></svg>
<div class="r" style="left:413px;top:457px;width:463px;height:1px;background:#dadce0;"></div>
<div class="r" style="left:413px;top:475px;width:216px;height:34px;border:1px solid #dadce0;border-radius:4px"></div>
<div class="t" style="left:438px;top:484.33px;font-size:14px;color:#188038;font-weight:400;letter-spacing:0.65px;-webkit-text-stroke:0.45px #188038;">Add another sort column</div>
<div class="r" style="left:690px;top:535px;width:94px;height:34px;border:1px solid #dadce0;border-radius:4px"></div>
<div class="t" style="left:715px;top:544.53px;font-size:14px;color:#188038;font-weight:400;letter-spacing:0.25px;-webkit-text-stroke:0.45px #188038;">Cancel</div>
<div class="r" style="left:798px;top:535px;width:79px;height:36px;background:#188038;border-radius:4px"></div>
<div class="t" style="left:823.5px;top:544.53px;font-size:14px;color:#fff;font-weight:400;letter-spacing:0.75px;-webkit-text-stroke:0.45px #fff;">Sort</div>
</div>
</body></html>
